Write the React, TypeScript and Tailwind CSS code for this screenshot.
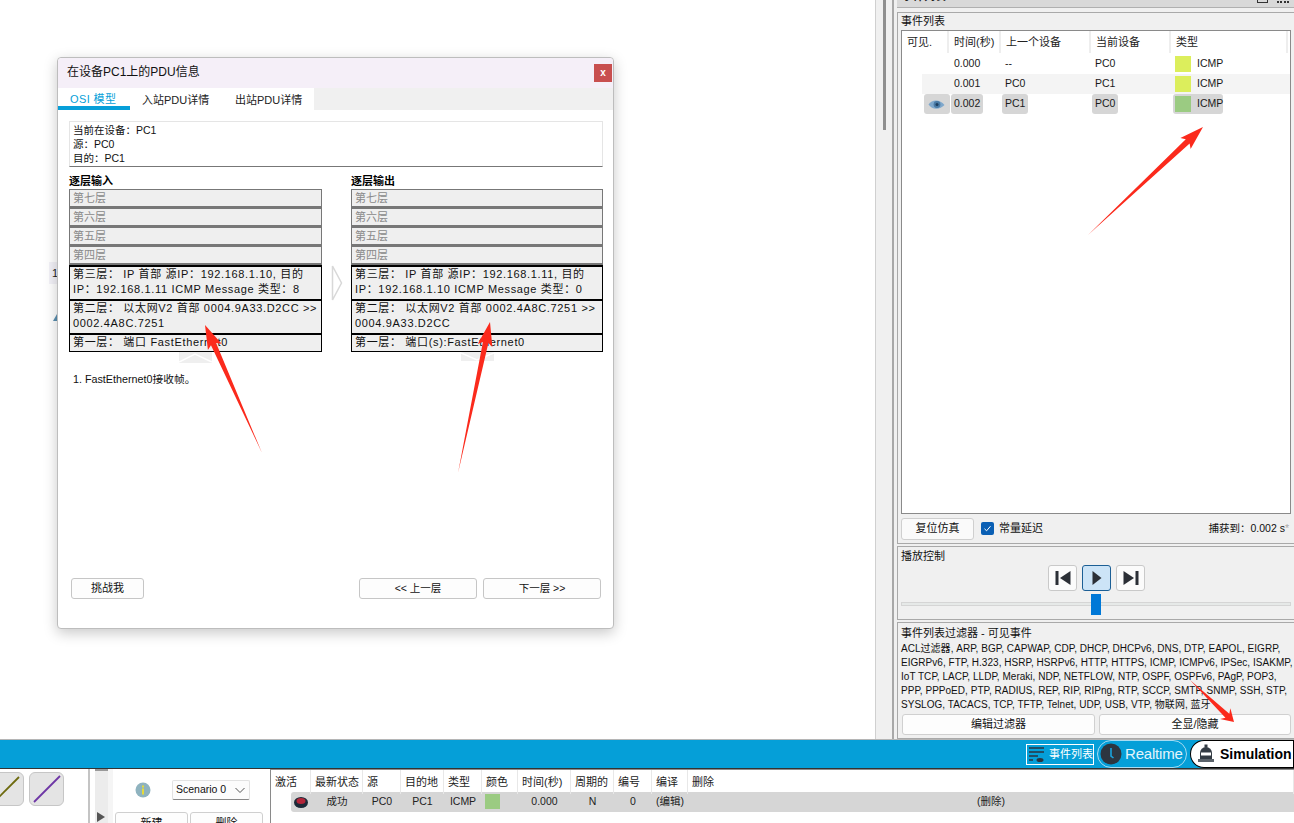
import React from "react";

const layersIn = [
  ["第三层： IP 首部 源IP：192.168.1.10, 目的", "IP：192.168.1.11 ICMP Message 类型：8"],
  ["第二层： 以太网V2 首部 0004.9A33.D2CC >>", "0002.4A8C.7251"],
  ["第一层： 端口 FastEthernet0"],
];
const layersOut = [
  ["第三层： IP 首部 源IP：192.168.1.11, 目的", "IP：192.168.1.10 ICMP Message 类型：0"],
  ["第二层： 以太网V2 首部 0002.4A8C.7251 >>", "0004.9A33.D2CC"],
  ["第一层： 端口(s):FastEthernet0"],
];
const filters = [
  "ACL过滤器, ARP, BGP, CAPWAP, CDP, DHCP, DHCPv6, DNS, DTP, EAPOL, EIGRP,",
  "EIGRPv6, FTP, H.323, HSRP, HSRPv6, HTTP, HTTPS, ICMP, ICMPv6, IPSec, ISAKMP,",
  "IoT TCP, LACP, LLDP, Meraki, NDP, NETFLOW, NTP, OSPF, OSPFv6, PAgP, POP3,",
  "PPP, PPPoED, PTP, RADIUS, REP, RIP, RIPng, RTP, SCCP, SMTP, SNMP, SSH, STP,",
  "SYSLOG, TACACS, TCP, TFTP, Telnet, UDP, USB, VTP, 物联网, 蓝牙",
];
const pduHeaders = ["激活", "最新状态", "源", "目的地", "类型", "颜色", "时间(秒)", "周期的", "编号", "编译", "删除"];

function LayerColumn({ title, layers, narrow }: { title: string; layers: string[][]; narrow?: boolean }) {
  return (
    <div className={narrow ? "w-[252px]" : "w-[253px]"}>
      <p className="mb-px h-[15px] pt-px text-[11px] leading-[14px] font-bold text-black">{title}</p>
      {["第七层", "第六层", "第五层", "第四层"].map((l) => (
        <div key={l} className="h-[19px] border border-b-2 border-[#777] bg-[#efefef] pl-[3px] text-[11px] leading-[16px] text-[#8a8a8a]">
          {l}
        </div>
      ))}
      {layers.map((lines, i) => (
        <div
          key={i}
          className={`border-x border-t-2 border-black bg-[#efefef] pl-[3px] text-[11px] tracking-[0.66px] whitespace-nowrap text-[#111] ${
            lines.length > 1 ? "h-[34px]" : "h-[19px] border-b"
          }`}
        >
          {lines.map((t) => (
            <p key={t} className="h-[15px] leading-[15px]">{t}</p>
          ))}
        </div>
      ))}
    </div>
  );
}

function Arrow({ tip, tail }: { tip: [number, number]; tail: [number, number] }) {
  const dx = tail[0] - tip[0];
  const dy = tail[1] - tip[1];
  const len = Math.hypot(dx, dy);
  const ux = dx / len;
  const uy = dy / len;
  const nx = -uy;
  const ny = ux;
  const h = Math.min(len * 0.2, 24);
  const at = (a: number, b: number) => `${tip[0] + ux * a + nx * b},${tip[1] + uy * a + ny * b}`;
  const pts = [at(0, 0), at(h, 7.5), at(h - 3, 2.8), tail.join(","), at(h - 3, -2.8), at(h, -7.5)].join(" ");
  return <polygon points={pts} fill="#fb2a1c" />;
}

function ChipCell({ children, chip }: { children: React.ReactNode; chip?: boolean }) {
  return (
    <span className={`flex h-5 items-center justify-self-start rounded-[3px] pr-[3px] pl-[3px] ${chip ? "bg-[#d6d6d6]" : ""}`}>
      {children}
    </span>
  );
}

function EventRow({ t, prev, cur, color, selected, stripe }: { t: string; prev: string; cur: string; color: string; selected?: boolean; stripe?: boolean }) {
  return (
    <div className="grid h-5 grid-cols-[20px_29px_51px_90px_80px_1fr] items-center text-[10.5px] text-[#1a1a1a]">
      <div />
      <div className={`flex h-5 items-center justify-center ${stripe ? "bg-[#f4f4f4]" : ""}`}>
        {selected && (
          <span className="flex h-5 w-[26px] items-center justify-center rounded-[3px] bg-[#d6d6d6]">
            <svg width="17" height="11" viewBox="0 0 17 11">
              <path d="M0.5 5.5C4 0 12 0 16.5 6C12 11 4 11 0.5 5.5Z" fill="#7fa8cc" />
              <circle cx="9" cy="5.5" r="3.4" fill="#4a7ba6" />
              <circle cx="9" cy="5.5" r="1.5" fill="#1d3f60" />
            </svg>
          </span>
        )}
      </div>
      <div className={`flex h-5 items-center ${stripe ? "bg-[#f4f4f4]" : ""}`}>
        <ChipCell chip={selected}>{t}</ChipCell>
      </div>
      <div className={`flex h-5 items-center ${stripe ? "bg-[#f4f4f4]" : ""}`}>
        <ChipCell chip={selected}>{prev}</ChipCell>
      </div>
      <div className={`flex h-5 items-center ${stripe ? "bg-[#f4f4f4]" : ""}`}>
        <ChipCell chip={selected}>{cur}</ChipCell>
      </div>
      <div className={`flex h-5 items-center ${stripe ? "bg-[#f4f4f4]" : ""}`}>
        <span className={`ml-px flex h-5 w-[50px] items-center gap-[6px] rounded-[3px] pl-[2px] ${selected ? "bg-[#d6d6d6]" : ""}`}>
          <span className="h-4 w-4 shrink-0" style={{ backgroundColor: color }} />
          ICMP
        </span>
      </div>
    </div>
  );
}

function PlayButton({ children, active }: { children: React.ReactNode; active?: boolean }) {
  return (
    <button className={`flex h-[26px] w-[29px] items-center justify-center rounded-[3px] border ${active ? "border-[#1c5f95] bg-[#cce4f7]" : "border-[#c9c9c9] bg-[#fbfbfb]"}`}>
      <svg width="16" height="16" viewBox="0 0 16 16" fill="#2b2f36">
        {children}
      </svg>
    </button>
  );
}

export default function App() {
  return (
    <div className="relative flex h-[823px] w-[1294px] flex-col overflow-hidden bg-white font-['Liberation_Sans','Noto_Sans_CJK_SC',sans-serif]">
      <div className="flex h-[740px] shrink-0 border-b border-[#b5b5b5]">
        {/* canvas */}
        <div className="relative w-[876px] border-r border-[#d0d0d0] bg-white">
          <div className="absolute top-[262px] left-[49px] h-[22px] w-[12px] bg-[#f3f2f8] pl-[3px] text-[11px] leading-[22px] text-[#222]">1</div>
          <div className="absolute top-[314px] left-[53px] h-0 w-0 border-x-[4px] border-b-[7px] border-x-transparent border-b-[#5b8fb0]" />
          {/* PDU window */}
          <div className="absolute top-[57px] left-[57px] flex h-[572px] w-[557px] flex-col rounded-[4px] border border-[#bdbdbd] bg-white shadow-[0_4px_14px_rgba(0,0,0,0.22)]">
            <div className="flex h-[30px] shrink-0 items-center justify-between rounded-t-[4px] bg-[#f5eff8] pr-px pl-[9px]">
              <span className="pb-[2px] text-[12px] text-[#111]">在设备PC1上的PDU信息</span>
              <span className="flex h-[18px] w-[18px] items-center justify-center bg-[#c84f4f] text-[10px] leading-none font-bold text-white">x</span>
            </div>
            <div className="flex h-[22px] shrink-0 bg-[#f0f0f0]">
              <div className="flex bg-white">
                <span className="h-[22px] w-[72px] border-b-[4px] border-[#069fd9] pl-[12px] text-[11px] leading-[22px] tracking-[0.4px] text-[#069fd9]">OSI 模型</span>
                <span className="w-[93px] pl-[12px] text-[11px] leading-[24px] text-[#222]">入站PDU详情</span>
                <span className="w-[91px] pl-[12px] text-[11px] leading-[24px] text-[#222]">出站PDU详情</span>
              </div>
            </div>
            <div className="flex min-h-0 flex-1 flex-col px-[11px] pt-[11px]">
              <div className="h-[46px] w-[534px] border-x border-t border-b border-x-[#e5e5e5] border-t-[#e5e5e5] border-b-[#777] pt-px pl-[3px] text-[10.5px] leading-[14px] text-[#111]">
                <p>当前在设备：PC1</p>
                <p>源：PC0</p>
                <p>目的：PC1</p>
              </div>
              <div className="mt-[6px] flex w-[534px] justify-between">
                <LayerColumn title="逐层输入" layers={layersIn} />
                <div className="flex items-start pt-[92px]">
                  <svg width="12" height="36" viewBox="0 0 12 36">
                    <path d="M1.5 1L10.5 18L1.5 35Z" fill="#fff" stroke="#d8d8d8" strokeWidth="1.5" />
                  </svg>
                </div>
                <LayerColumn title="逐层输出" layers={layersOut} narrow />
              </div>
              <div className="flex h-[11px] w-[534px]">
                <div className="ml-[110px]">
                  <svg width="33" height="11" viewBox="0 0 33 11" className="block">
                    <rect width="33" height="11" fill="#efefef" />
                    <path d="M0 10L16 2L33 10" fill="none" stroke="#fff" strokeWidth="1.5" />
                  </svg>
                </div>
                <div className="ml-[249px]">
                  <svg width="33" height="9" viewBox="0 0 33 9" className="block">
                    <rect width="33" height="9" fill="#efefef" />
                    <path d="M0 1L16 8L33 1" fill="none" stroke="#fff" strokeWidth="1.5" />
                  </svg>
                </div>
              </div>
              <p className="mt-[9px] pl-[4px] text-[10.75px] leading-[14px] text-[#111]">1. FastEthernet0接收帧。</p>
              <div className="mt-auto mb-[29px] flex items-center pl-[2px]">
                <button className="h-[21px] w-[73px] rounded-[3px] border border-[#c6c6c6] bg-[#fdfdfd] text-[11px] text-[#111]">挑战我</button>
                <button className="ml-auto h-[21px] w-[118px] rounded-[3px] border border-[#c6c6c6] bg-[#fdfdfd] text-[10.5px] text-[#111]">&lt;&lt; 上一层</button>
                <button className="mr-px ml-[6px] h-[21px] w-[118px] rounded-[3px] border border-[#c6c6c6] bg-[#fdfdfd] text-[10.5px] text-[#111]">下一层 &gt;&gt;</button>
              </div>
            </div>
          </div>
        </div>

        {/* scrollbar */}
        <div className="w-[16px] bg-[#f0f0f0] pl-[7px]">
          <div className="h-[130px] w-[3px] bg-[#8f8f8f]" />
        </div>

        {/* right panel */}
        <div className="flex min-w-0 flex-1 flex-col border-l-2 border-[#a8a8a8] bg-[#f0f0f0] pl-[3px]">
          <div className="flex h-[8px] shrink-0 items-start justify-between overflow-hidden border-b border-[#b0b0b0] bg-[#d9d9d9] pr-[5px] pl-[5px]">
            <span className="-mt-[11px] text-[11px] leading-[14px] font-bold text-[#222]">事件列表</span>
            <span className="flex gap-[9px]">
              <span className="h-[3px] w-[11px] border-x border-b border-[#333]" />
              <span className="h-[3px] w-[12px] border-b-2 border-dotted border-[#333]" />
            </span>
          </div>
          <div className="mt-[4px] flex h-[532px] shrink-0 flex-col border border-r-0 border-[#a9a9a9] px-[3px]">
            <p className="h-[17px] text-[11px] leading-[16px] text-[#111]">事件列表</p>
            <div className="h-[484px] border border-[#8a8a8a] bg-white">
              <div className="grid h-[23px] grid-cols-[47px_52px_90px_80px_117px] text-[11px] leading-[22px] text-[#222]">
                {["可见.", "时间(秒)", "上一个设备", "当前设备", "类型"].map((h) => (
                  <span key={h} className="h-[22px] border-r-2 border-[#eeeeee] pl-[5px]">{h}</span>
                ))}
              </div>
              <EventRow t="0.000" prev="--" cur="PC0" color="#dcee5c" />
              <EventRow t="0.001" prev="PC0" cur="PC1" color="#dcee5c" stripe />
              <EventRow t="0.002" prev="PC1" cur="PC0" color="#9bcb82" selected />
            </div>
            <div className="flex h-[29px] items-center">
              <button className="h-[22px] w-[73px] rounded-[3px] border border-[#cfcfcf] bg-[#fafafa] text-[11px] text-[#111]">复位仿真</button>
              <span className="ml-[7px] flex h-[13px] w-[13px] items-center justify-center rounded-[2px] bg-[#0a5fb4]">
                <svg width="9" height="9" viewBox="0 0 9 9"><path d="M1.5 4.8L3.6 6.8L7.5 2.2" fill="none" stroke="#fff" strokeWidth="1" /></svg>
              </span>
              <span className="ml-[5px] text-[11px] text-[#111]">常量延迟</span>
              <span className="mr-[2px] ml-auto text-[10.5px] text-[#111]">捕获到：0.002 s<span className="text-[#aaa]">*</span></span>
            </div>
          </div>
          <div className="mt-[2px] flex h-[74px] shrink-0 flex-col border border-r-0 border-[#a9a9a9] px-[3px]">
            <p className="h-[18px] text-[11px] leading-[18px] text-[#111]">播放控制</p>
            <div className="flex justify-center gap-[5px] pl-px">
              <PlayButton><rect x="0.500" y="1" width="3" height="14" /><path d="M15.500 1V15L5 8Z" /></PlayButton>
              <PlayButton active><path d="M3.500 1V15L12.500 8Z" /></PlayButton>
              <PlayButton><path d="M0.500 1V15L11 8Z" /><rect x="12.500" y="1" width="3" height="14" /></PlayButton>
            </div>
            <div className="relative mt-[11px] h-[4px] w-[390px] border border-[#d5d5d5] bg-[#e6e9e8]">
              <div className="absolute top-[-9px] left-[189px] h-[21px] w-[10px] bg-[#0078d7]" />
            </div>
          </div>
          <div className="mt-[2px] flex min-h-0 flex-1 flex-col border border-r-0 border-[#a9a9a9] px-[3px]">
            <p className="mt-[3px] h-[15px] text-[11px] leading-[15px] text-[#111]">事件列表过滤器 - 可见事件</p>
            <div className="mt-px text-[10px] tracking-[0.03px] whitespace-nowrap text-[#111]">
              {filters.map((f) => (
                <p key={f} className="h-[14px] leading-[14px]">{f}</p>
              ))}
            </div>
            <div className="mt-[2px] flex gap-[4px] pl-px">
              <button className="h-[21px] w-[193px] rounded-[3px] border border-[#d0d0d0] bg-[#fdfdfd] text-[11px] text-[#111]">编辑过滤器</button>
              <button className="h-[21px] w-[192px] rounded-[3px] border border-[#d0d0d0] bg-[#fdfdfd] text-[11px] text-[#111]">全显/隐藏</button>
            </div>
          </div>
        </div>
      </div>

      {/* mode bar */}
      <div className="flex h-[29px] shrink-0 items-center justify-end border-b border-[#333] bg-[#059fd8]">
        <div className="flex h-[21px] w-[68px] items-center gap-[4px] border border-white pl-[2px]">
          <svg width="16" height="17" viewBox="0 0 16 17" fill="none" stroke="#2b3440" strokeWidth="1.5">
            <path d="M0 2H15M0 6H15M0 10H9M0 14H4" />
            <ellipse cx="11" cy="14" rx="3.5" ry="2" fill="#2b3440" stroke="none" />
          </svg>
          <span className="text-[11px] whitespace-nowrap text-white">事件列表</span>
        </div>
        <div className="ml-[3px] flex h-[28px] w-[90px] items-center rounded-full border border-[#a8dcf2] pl-[2px]">
          <svg width="22" height="22" viewBox="0 0 22 22">
            <circle cx="11" cy="11" r="10.5" fill="#2d3640" />
            <path d="M11 5V13L13.5 15" fill="none" stroke="#1aa3dc" strokeWidth="1.6" />
          </svg>
          <span className="ml-[3px] text-[15px] tracking-[-0.2px] text-[#e3f4fb]">Realtime</span>
        </div>
        <div className="ml-[3px] flex h-[28px] w-[104px] shrink-0 items-center rounded-l-full rounded-r-[12px] border border-black bg-white pl-[4px]">
          <svg width="22" height="22" viewBox="0 0 22 22">
            <path d="M5 10A6 6 0 0 1 17 10V16H5Z" fill="#333b44" />
            <path d="M3 16H19V19H3Z" fill="#5b636b" />
            <rect x="6" y="9.500" width="10" height="3" fill="#fff" />
            <rect x="9.500" y="1.500" width="3" height="3" fill="#333b44" />
          </svg>
          <span className="ml-[3px] text-[14px] font-bold whitespace-nowrap text-black">Simulation</span>
        </div>
      </div>

      {/* bottom */}
      <div className="flex min-h-0 flex-1 overflow-hidden">
        <div className="flex w-[90px] shrink-0 items-start gap-[5px] border-r-2 border-[#c4c4c4] pt-[3px]">
          <span className="-ml-[11px] flex h-[34px] w-[35px] shrink-0 items-center justify-center rounded-[6px] border border-[#c6c6c6] bg-[#e4e4e4]">
            <svg width="26" height="26" viewBox="0 0 26 26"><path d="M1 25L25 1" stroke="#6d6a0e" strokeWidth="1.8" /></svg>
          </span>
          <span className="flex h-[34px] w-[35px] shrink-0 items-center justify-center rounded-[6px] border border-[#c6c6c6] bg-[#e4e4e4]">
            <svg width="30" height="30" viewBox="0 0 30 30"><path d="M2 28L28 2" stroke="#6d35a5" strokeWidth="1.8" /></svg>
          </span>
        </div>
        <div className="relative ml-[5px] w-[13px] shrink-0 border-t-2 border-[#999] bg-[#ececec] bg-[radial-gradient(#cfcfcf_0.5px,transparent_0.5px)] bg-[length:2px_2px]">
          <div className="absolute top-[41px] left-[2px] h-0 w-0 border-y-[5px] border-l-[8px] border-y-transparent border-l-[#555]" />
        </div>
        <div className="w-[5px] shrink-0 bg-[#f5f5f5]" />
        <div className="flex w-[157px] shrink-0 flex-col pt-[11px]">
          <div className="flex items-center">
            <svg width="16" height="16" viewBox="0 0 16 16" className="ml-[22px]">
              <circle cx="8" cy="8" r="7.5" fill="#8fb3bf" />
              <rect x="7" y="6.500" width="2" height="6" fill="#e6dc3a" />
              <rect x="7" y="3.500" width="2" height="2" fill="#e6dc3a" />
            </svg>
            <div className="ml-[21px] flex h-[20px] w-[78px] items-center justify-between rounded-[2px] border border-[#e2e2e2] border-b-[#888] bg-[#fcfcfc] pr-[3px] pl-[3px] text-[10.5px] whitespace-nowrap text-[#111]">
              Scenario 0
              <svg width="12" height="12" viewBox="0 0 12 12"><path d="M1.500 4L6 8.500L10.500 4" fill="none" stroke="#555" strokeWidth="1" /></svg>
            </div>
          </div>
          <div className="mt-[12px] ml-[2px] flex gap-[2px]">
            <button className="h-[22px] w-[73px] shrink-0 rounded-[3px] border border-[#cfcfcf] bg-[#fdfdfd] text-[11px] text-[#111]">新建</button>
            <button className="h-[22px] w-[73px] shrink-0 rounded-[3px] border border-[#cfcfcf] bg-[#fdfdfd] text-[11px] text-[#111]">删除</button>
          </div>
        </div>
        <div className="min-w-0 flex-1 border-t border-l border-[#8a8a8a]">
          <div className="grid h-[22px] grid-cols-[40px_52px_38px_43px_38px_36px_53px_43px_38px_36px_1fr] text-[11px] leading-[24px] whitespace-nowrap text-[#222]">
            {pduHeaders.map((h) => (
              <span key={h} className="border-r border-[#e8e8e8] pl-[4px]">{h}</span>
            ))}
          </div>
          <div className="ml-[20px] grid h-5 grid-cols-[20px_52px_38px_43px_38px_36px_53px_43px_38px_36px_1fr] items-center rounded-l-[3px] bg-[#d6d6d6] pb-px text-center text-[10.5px] text-[#222]">
            <span className="flex justify-center">
              <svg width="14" height="12" viewBox="0 0 14 12">
                <ellipse cx="7" cy="6.500" rx="7" ry="5.500" fill="#1c2a38" />
                <ellipse cx="7" cy="5" rx="4.500" ry="3" fill="#b3263a" />
              </svg>
            </span>
            <span>成功</span>
            <span>PC0</span>
            <span>PC1</span>
            <span>ICMP</span>
            <span className="mx-[3px] h-[15px] w-[15px] bg-[#9bcb82]" />
            <span>0.000</span>
            <span>N</span>
            <span>0</span>
            <span>(编辑)</span>
            <span>(删除)</span>
          </div>
        </div>
      </div>

      {/* annotation arrows drawn over the screenshot */}
      <svg width="1294" height="823" viewBox="0 0 1294 823" className="pointer-events-none absolute top-0 left-0">
        <Arrow tip={[205, 325]} tail={[262, 453]} />
        <Arrow tip={[490, 322]} tail={[458, 473]} />
        <Arrow tip={[1203, 127]} tail={[1088, 235]} />
        <Arrow tip={[1234, 722]} tail={[1190, 680]} />
      </svg>
    </div>
  );
}
